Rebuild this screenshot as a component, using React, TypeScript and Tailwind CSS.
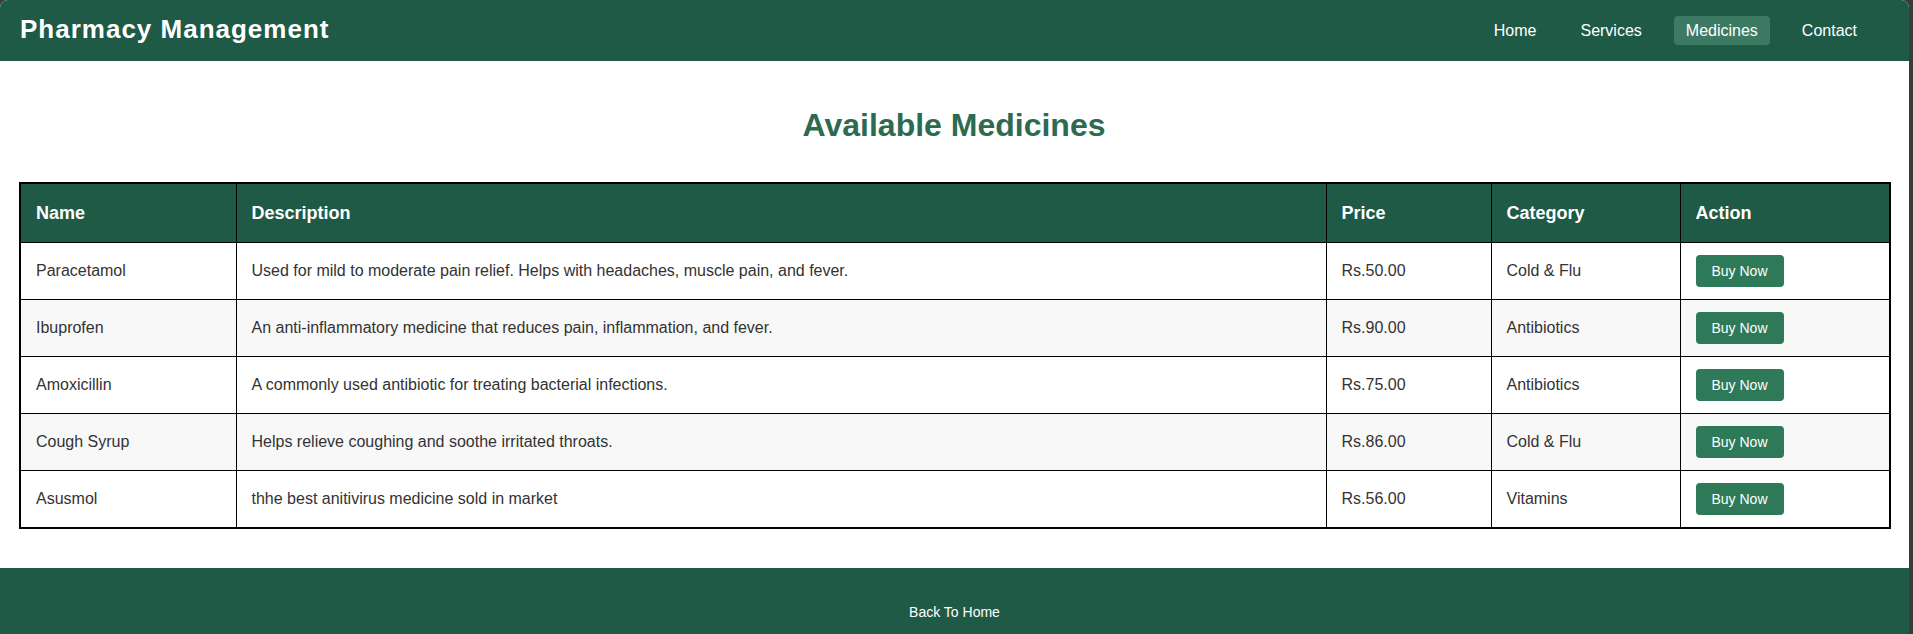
import React from 'react';

interface Medicine {
  name: string;
  description: string;
  price: string;
  category: string;
}

const medicines: Medicine[] = [
  {
    name: 'Paracetamol',
    description: 'Used for mild to moderate pain relief. Helps with headaches, muscle pain, and fever.',
    price: 'Rs.50.00',
    category: 'Cold & Flu',
  },
  {
    name: 'Ibuprofen',
    description: 'An anti-inflammatory medicine that reduces pain, inflammation, and fever.',
    price: 'Rs.90.00',
    category: 'Antibiotics',
  },
  {
    name: 'Amoxicillin',
    description: 'A commonly used antibiotic for treating bacterial infections.',
    price: 'Rs.75.00',
    category: 'Antibiotics',
  },
  {
    name: 'Cough Syrup',
    description: 'Helps relieve coughing and soothe irritated throats.',
    price: 'Rs.86.00',
    category: 'Cold & Flu',
  },
  {
    name: 'Asusmol',
    description: 'thhe best anitivirus medicine sold in market',
    price: 'Rs.56.00',
    category: 'Vitamins',
  },
];

const navLinks = ['Home', 'Services', 'Medicines', 'Contact'];

const App: React.FC = () => {
  return (
    <div className="flex h-[634px] overflow-hidden bg-[#3a3a3a] font-['Liberation_Sans',Arial,sans-serif]">
      <div className="flex flex-1 flex-col overflow-hidden rounded-t-[8px] bg-white">
        <header className="flex h-[61px] shrink-0 items-center justify-between bg-[#1f5a47] pl-5 pr-[40px]">
          <h1 className="mb-[3px] text-[26px] font-bold leading-[32px] tracking-[1px] text-white">Pharmacy Management</h1>
          <nav className="flex gap-5">
            {navLinks.map((link) => (
              <a
                key={link}
                href="#"
                className={
                  link === 'Medicines'
                    ? 'rounded-[4px] bg-[#3d7a63] px-3 py-[5px] text-base leading-[19px] text-white'
                    : 'rounded-[4px] px-3 py-[5px] text-base leading-[19px] text-white'
                }
              >
                {link}
              </a>
            ))}
          </nav>
        </header>

        <main className="flex-1 pl-[19px] pr-5 pt-[46px]">
          <h2 className="mb-[38px] text-center text-[32px] font-bold leading-[37px] text-[#2d6a52]">
            Available Medicines
          </h2>

          <table className="w-full table-fixed border-collapse border-2 border-black text-left">
            <thead>
              <tr className="bg-[#1f5a47] text-white">
                <th className="w-[216px] border border-black px-[15px] pb-[18px] pt-[19px] text-[18px] font-bold leading-[21px]">Name</th>
                <th className="w-[1090px] border border-black px-[15px] pb-[18px] pt-[19px] text-[18px] font-bold leading-[21px]">Description</th>
                <th className="w-[165px] border border-black px-[15px] pb-[18px] pt-[19px] text-[18px] font-bold leading-[21px]">Price</th>
                <th className="w-[189px] border border-black px-[15px] pb-[18px] pt-[19px] text-[18px] font-bold leading-[21px]">Category</th>
                <th className="w-[210px] border border-black px-[15px] pb-[18px] pt-[19px] text-[18px] font-bold leading-[21px]">Action</th>
              </tr>
            </thead>
            <tbody>
              {medicines.map((med, i) => (
                <tr key={med.name} className={i % 2 === 1 ? 'bg-[#f8f8f8]' : 'bg-white'}>
                  <td className="border border-black px-[15px] py-3 text-base text-[#333]">{med.name}</td>
                  <td className="border border-black px-[15px] py-3 text-base text-[#333]">{med.description}</td>
                  <td className="border border-black px-[15px] py-3 text-base text-[#333]">{med.price}</td>
                  <td className="border border-black px-[15px] py-3 text-base text-[#333]">{med.category}</td>
                  <td className="border border-black px-[15px] py-3">
                    <button className="rounded-[4px] bg-[#2e7a58] px-4 py-2 text-sm leading-4 text-white">
                      Buy Now
                    </button>
                  </td>
                </tr>
              ))}
            </tbody>
          </table>
        </main>

        <footer className="h-[66px] shrink-0 bg-[#1f5a47] pt-[32px] text-center">
          <a href="#" className="text-sm leading-4 text-white">
            Back To Home
          </a>
        </footer>
      </div>
      <div className="w-[4px] shrink-0" />
    </div>
  );
};

export default App;
